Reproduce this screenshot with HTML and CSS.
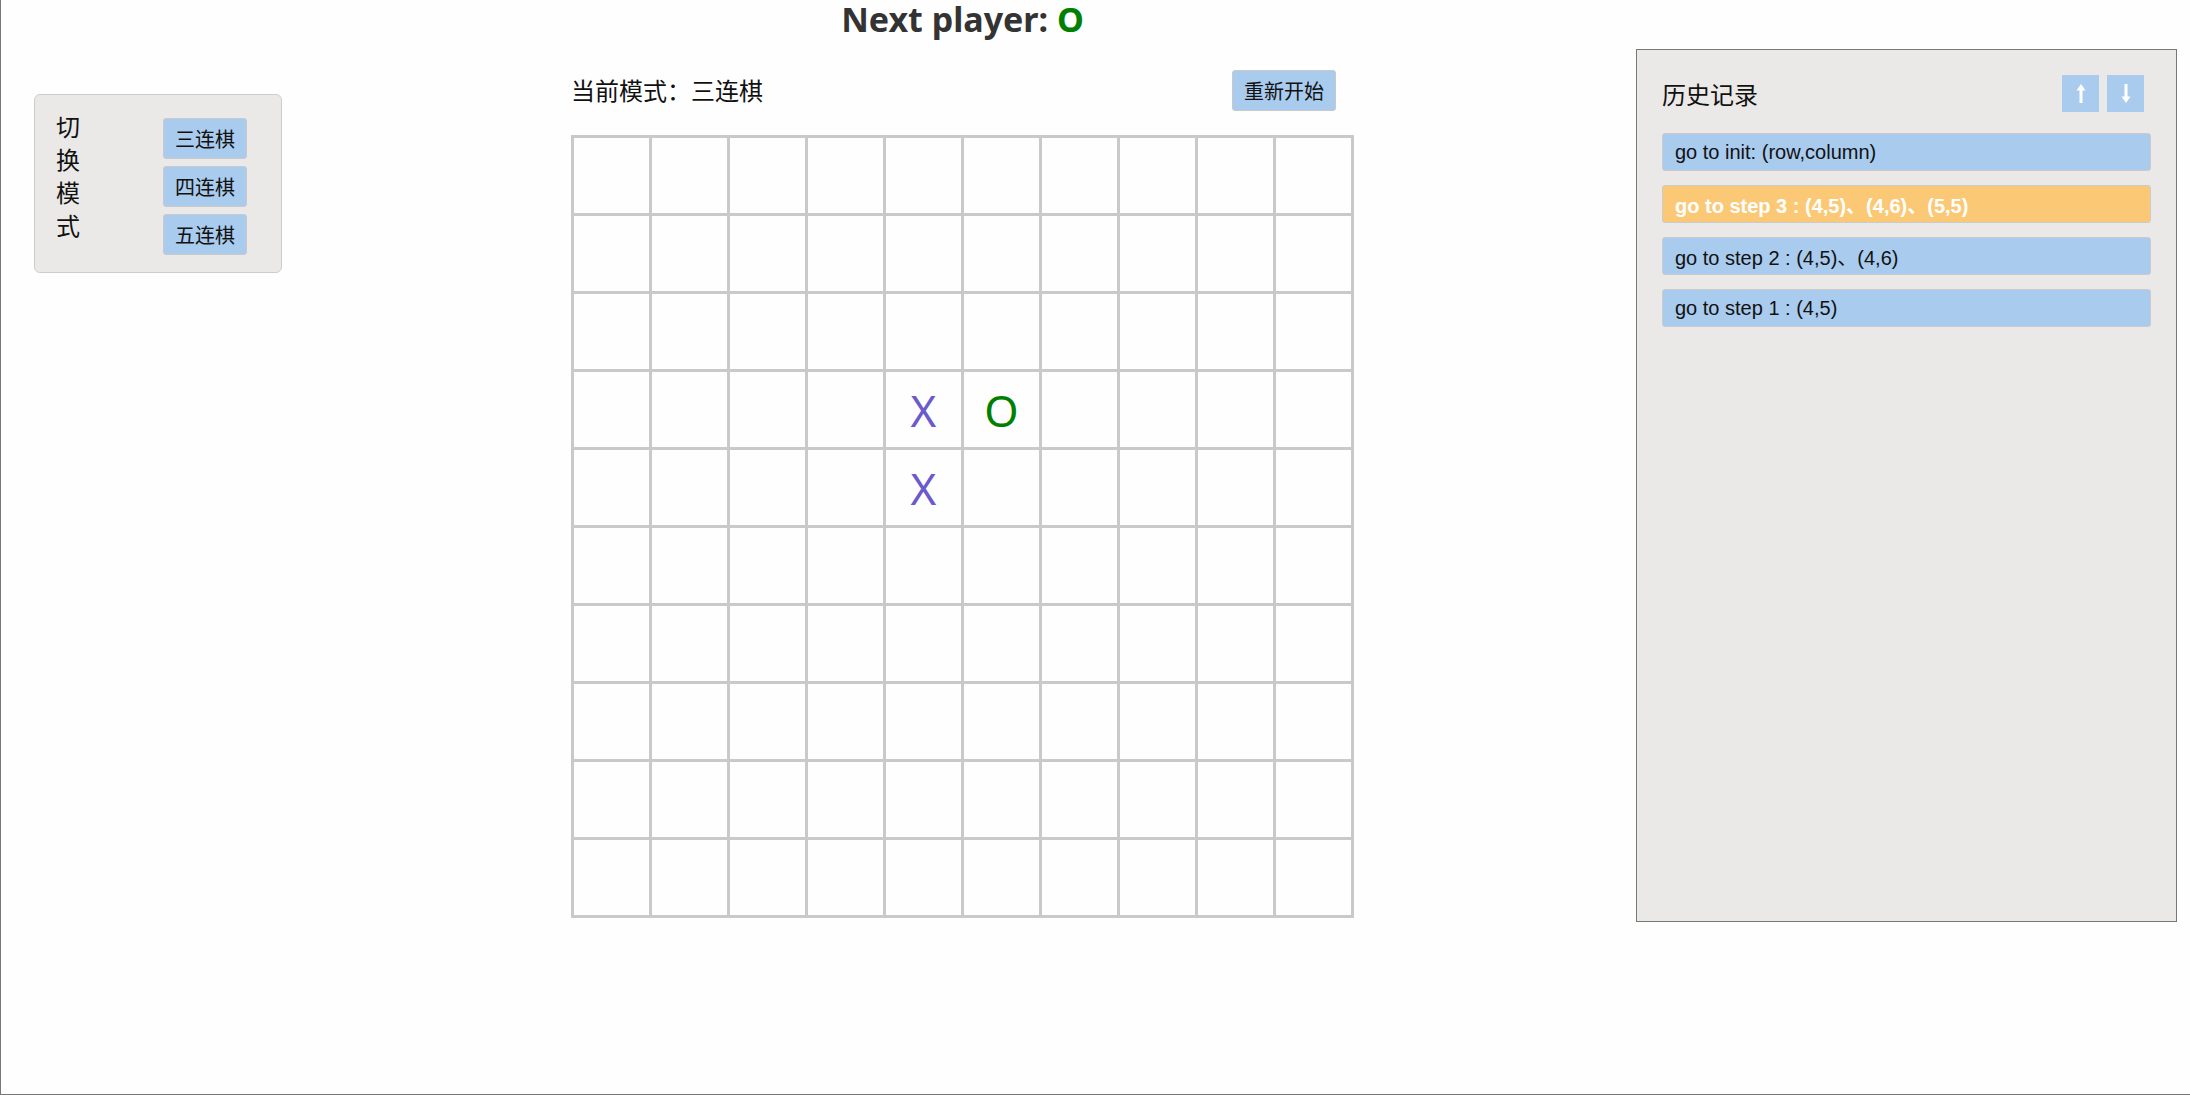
FILE: index.html
```html
<!DOCTYPE html>
<html lang="zh">
<head>
<meta charset="utf-8">
<title>连棋</title>
<link rel="stylesheet" href="styles.css">
</head>
<body>
<div class="page">
  <aside class="mode-panel">
    <div class="mode-label">切换模式</div>
    <div class="mode-buttons">
      <button class="btn">三连棋</button>
      <button class="btn">四连棋</button>
      <button class="btn">五连棋</button>
    </div>
  </aside>

  <main class="game">
    <h1 class="status">Next player: <span class="o">O</span></h1>
    <div class="toolbar">
      <span class="mode-current">当前模式：三连棋</span>
      <button class="btn">重新开始</button>
    </div>
    <div class="board">
      <div class="cell"></div><div class="cell"></div><div class="cell"></div><div class="cell"></div><div class="cell"></div><div class="cell"></div><div class="cell"></div><div class="cell"></div><div class="cell"></div><div class="cell"></div>
      <div class="cell"></div><div class="cell"></div><div class="cell"></div><div class="cell"></div><div class="cell"></div><div class="cell"></div><div class="cell"></div><div class="cell"></div><div class="cell"></div><div class="cell"></div>
      <div class="cell"></div><div class="cell"></div><div class="cell"></div><div class="cell"></div><div class="cell"></div><div class="cell"></div><div class="cell"></div><div class="cell"></div><div class="cell"></div><div class="cell"></div>
      <div class="cell"></div><div class="cell"></div><div class="cell"></div><div class="cell"></div><div class="cell x">X</div><div class="cell o">O</div><div class="cell"></div><div class="cell"></div><div class="cell"></div><div class="cell"></div>
      <div class="cell"></div><div class="cell"></div><div class="cell"></div><div class="cell"></div><div class="cell x">X</div><div class="cell"></div><div class="cell"></div><div class="cell"></div><div class="cell"></div><div class="cell"></div>
      <div class="cell"></div><div class="cell"></div><div class="cell"></div><div class="cell"></div><div class="cell"></div><div class="cell"></div><div class="cell"></div><div class="cell"></div><div class="cell"></div><div class="cell"></div>
      <div class="cell"></div><div class="cell"></div><div class="cell"></div><div class="cell"></div><div class="cell"></div><div class="cell"></div><div class="cell"></div><div class="cell"></div><div class="cell"></div><div class="cell"></div>
      <div class="cell"></div><div class="cell"></div><div class="cell"></div><div class="cell"></div><div class="cell"></div><div class="cell"></div><div class="cell"></div><div class="cell"></div><div class="cell"></div><div class="cell"></div>
      <div class="cell"></div><div class="cell"></div><div class="cell"></div><div class="cell"></div><div class="cell"></div><div class="cell"></div><div class="cell"></div><div class="cell"></div><div class="cell"></div><div class="cell"></div>
      <div class="cell"></div><div class="cell"></div><div class="cell"></div><div class="cell"></div><div class="cell"></div><div class="cell"></div><div class="cell"></div><div class="cell"></div><div class="cell"></div><div class="cell"></div>
    </div>
  </main>

  <aside class="history">
    <div class="history-head">
      <span class="history-title">历史记录</span>
      <div class="sort-buttons">
        <button class="sort-btn" aria-label="up">
          <svg width="10" height="19" viewBox="0 0 10 19"><path d="M5 0 L9.5 6.5 L6.5 6.5 L6.5 19 L3.5 19 L3.5 6.5 L0.5 6.5 Z" fill="#fff"/></svg>
        </button>
        <button class="sort-btn" aria-label="down">
          <svg width="10" height="19" viewBox="0 0 10 19"><path d="M5 19 L9.5 12.5 L6.5 12.5 L6.5 0 L3.5 0 L3.5 12.5 L0.5 12.5 Z" fill="#fff"/></svg>
        </button>
      </div>
    </div>
    <ul class="steps">
      <li class="step">go to init: (row,column)</li>
      <li class="step active">go to step 3 : (4,5)、(4,6)、(5,5)</li>
      <li class="step">go to step 2 : (4,5)、(4,6)</li>
      <li class="step">go to step 1 : (4,5)</li>
    </ul>
  </aside>
</div>
</body>
</html>
```

FILE: styles.css
```css
* { box-sizing: border-box; }

html, body {
  margin: 0;
  padding: 0;
  background: #fefefe;
}

body {
  font-family: "Noto Sans CJK SC", "Noto Sans", sans-serif;
  color: #111;
}

.page {
  display: flex;
  align-items: flex-start;
  height: 1095px;
  border-left: 1px solid #777;
  border-bottom: 1px solid #777;
}

/* ---------- mode panel ---------- */
.mode-panel {
  margin: 94px 0 0 33px;
  width: 248px;
  height: 179px;
  display: flex;
  justify-content: space-between;
  padding: 14px 34px 0 21px;
  background: #ebe9e7;
  border: 1px solid #cfcccc;
  border-radius: 6px;
}

.mode-label {
  width: 25px;
  font-size: 24px;
  line-height: 33px;
  color: #111;
}

.mode-buttons {
  display: flex;
  flex-direction: column;
  gap: 7px;
  padding-top: 9px;
}

.btn {
  height: 41px;
  padding: 0 11px;
  font-family: "Noto Sans CJK SC", sans-serif;
  font-size: 20px;
  color: #111;
  background: #a9cbee;
  border: 1px solid #c9c9c9;
  border-radius: 3px;
  cursor: pointer;
}

/* ---------- game ---------- */
.game {
  margin-left: 289px;
  width: 783px;
}

.status {
  margin: 0;
  height: 38px;
  font-family: "Noto Sans", sans-serif;
  font-size: 34px;
  line-height: 38px;
  font-weight: 700;
  color: #333;
  text-align: center;
}

.status .o { color: #008000; }

.toolbar {
  margin-top: 32px;
  height: 40px;
  display: flex;
  align-items: center;
  justify-content: space-between;
  padding-right: 18px;
}

.mode-current {
  font-size: 24px;
  line-height: 40px;
  color: #111;
}

.board {
  margin-top: 25px;
  display: grid;
  grid-template-columns: repeat(10, 75px);
  grid-auto-rows: 75px;
  gap: 3px;
  padding: 3px;
  background: #c9c9c9;
  width: 783px;
}

.cell {
  background: #fefefe;
  display: flex;
  align-items: center;
  justify-content: center;
  font-family: "Noto Sans", sans-serif;
  font-size: 44px;
  line-height: 1;
}

.cell.x { color: #6a5acd; }
.cell.o { color: #008000; }

/* ---------- history ---------- */
.history {
  margin: 49px 0 0 282px;
  width: 541px;
  height: 873px;
  background: #ebe9e7;
  border: 1px solid #777;
  padding: 25px 25px 0 25px;
}

.history-head {
  display: flex;
  align-items: center;
  justify-content: space-between;
  height: 37px;
  padding-right: 7px;
}

.history-title {
  font-size: 24px;
  color: #111;
}

.sort-buttons {
  display: flex;
  gap: 8px;
}

.sort-btn {
  width: 37px;
  height: 37px;
  padding: 0;
  border: none;
  background: #a9cbee;
  display: flex;
  align-items: center;
  justify-content: center;
  cursor: pointer;
}

.steps {
  list-style: none;
  margin: 21px 0 0 0;
  padding: 0;
}

.step {
  height: 38px;
  margin-bottom: 14px;
  padding-left: 12px;
  display: flex;
  align-items: center;
  font-family: "Liberation Sans", "Noto Sans CJK SC", sans-serif;
  font-size: 20px;
  color: #111;
  background: #a9cbee;
  border: 1px solid #cbcbcb;
  border-radius: 3px;
}

.step.active {
  background: #fbc975;
  color: #fff;
  font-weight: 700;
}
```
